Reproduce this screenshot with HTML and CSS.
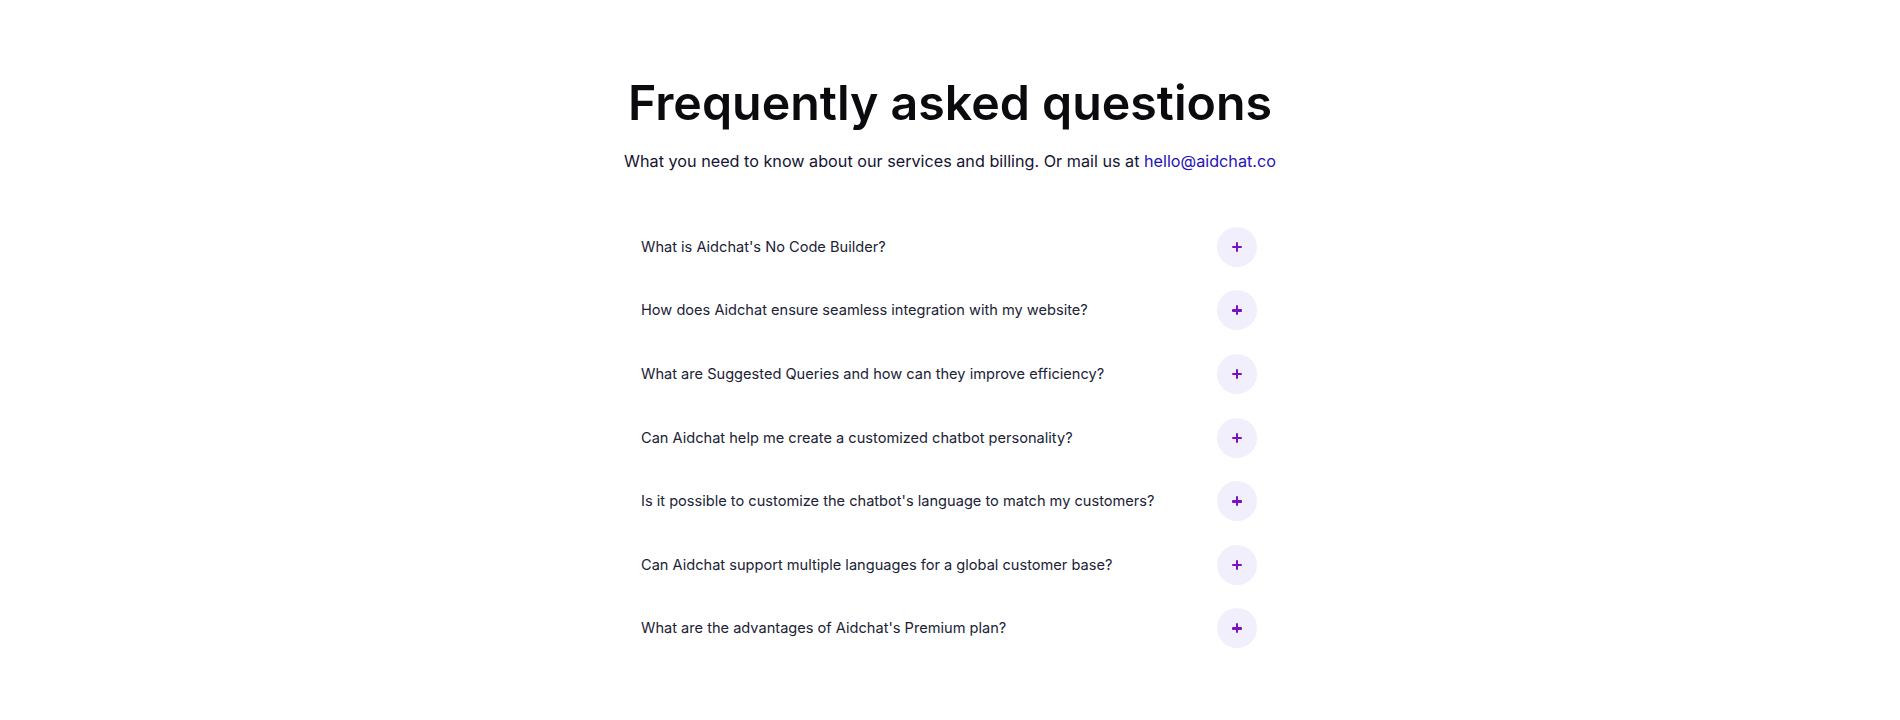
FILE: index.html
```html
<!DOCTYPE html>
<html lang="en">

<head>
    <meta charset="UTF-8">
    <meta name="viewport" content="width=device-width, initial-scale=1.0">
    <title>FAQ</title>
    <link rel="stylesheet" href="styles.css">
</head>

<body>
    <section class="faq">
        <h1 class="faq-title">Frequently asked questions</h1>
        <p class="faq-sub">What you need to know about our services and billing. Or mail us at <a href="#" class="faq-mail">hello@aidchat.co</a></p>

        <div class="faq-list">
            <div class="faq-item">
                <span class="faq-q">What is Aidchat's No Code Builder?</span>
                <button class="faq-toggle"><span class="plus"></span></button>
            </div>
            <div class="faq-item">
                <span class="faq-q">How does Aidchat ensure seamless integration with my website?</span>
                <button class="faq-toggle"><span class="plus"></span></button>
            </div>
            <div class="faq-item">
                <span class="faq-q">What are Suggested Queries and how can they improve efficiency?</span>
                <button class="faq-toggle"><span class="plus"></span></button>
            </div>
            <div class="faq-item">
                <span class="faq-q">Can Aidchat help me create a customized chatbot personality?</span>
                <button class="faq-toggle"><span class="plus"></span></button>
            </div>
            <div class="faq-item">
                <span class="faq-q">Is it possible to customize the chatbot's language to match my customers?</span>
                <button class="faq-toggle"><span class="plus"></span></button>
            </div>
            <div class="faq-item">
                <span class="faq-q">Can Aidchat support multiple languages for a global customer base?</span>
                <button class="faq-toggle"><span class="plus"></span></button>
            </div>
            <div class="faq-item">
                <span class="faq-q">What are the advantages of Aidchat's Premium plan?</span>
                <button class="faq-toggle"><span class="plus"></span></button>
            </div>
        </div>
    </section>
</body>

</html>
```

FILE: styles.css
```css
/* Reset CSS */
* {
    margin: 0;
    padding: 0;
    box-sizing: border-box;
}

body {
    font-family: 'Inter', 'Liberation Sans', sans-serif;
    background: #ffffff;
    color: #1a1a2e;
}

.faq {
    width: 650px;
    margin: 0 auto;
    padding-top: 73px;
    display: flex;
    flex-direction: column;
    align-items: center;
}

.faq-title {
    font-size: 48.3px;
    font-weight: 600;
    line-height: 60px;
    color: #0b0b0f;
}

.faq-sub {
    margin-top: 15px;
    font-size: 16.2px;
    line-height: 26px;
    color: #141433;
    white-space: nowrap;
}

.faq-mail {
    color: #2412b8;
    text-decoration: none;
}

.faq-list {
    width: 100%;
    margin-top: 41px;
}

.faq-item {
    display: flex;
    align-items: center;
    justify-content: space-between;
    padding: 11.8px 18px 11.8px 16px;
}

.faq-q {
    font-size: 14.6px;
    color: #202236;
}

.faq-toggle {
    width: 40px;
    height: 40px;
    border: none;
    border-radius: 50%;
    background: #f2effc;
    display: flex;
    align-items: center;
    justify-content: center;
    cursor: pointer;
}

.plus {
    position: relative;
    width: 10px;
    height: 10px;
}

.plus::before,
.plus::after {
    content: "";
    position: absolute;
    background: #7a12bd;
    border-radius: 1px;
}

.plus::before {
    left: 0;
    top: 4px;
    width: 10px;
    height: 2.5px;
}

.plus::after {
    left: 3.75px;
    top: 0;
    width: 2.5px;
    height: 10px;
}
```
